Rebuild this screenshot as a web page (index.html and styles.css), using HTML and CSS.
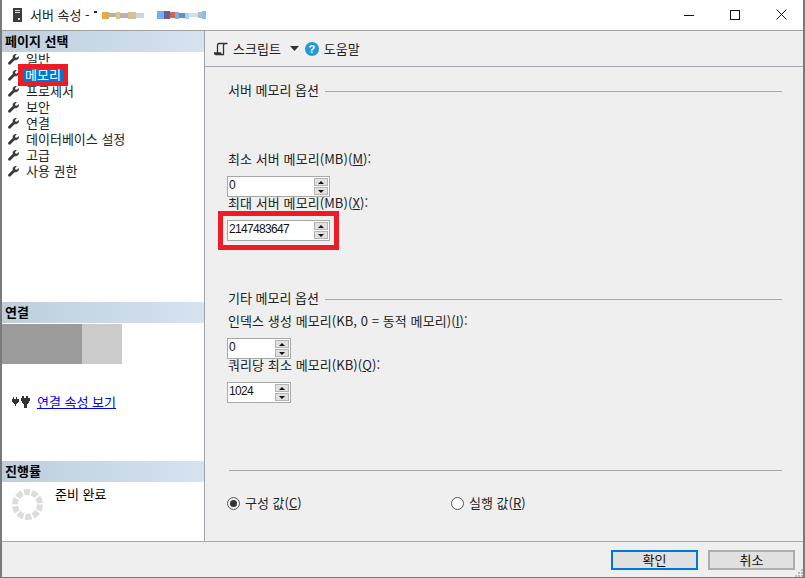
FILE: index.html
```html
<!DOCTYPE html>
<html lang="ko">
<head>
<meta charset="utf-8">
<title>서버 속성</title>
<link rel="stylesheet" href="styles.css">
</head>
<body>
<svg class="defs" width="0" height="0"><defs>
<symbol id="wrench" viewBox="0 0 12 12"><path d="M11.6 2.2 9.6 4.2 8 3.9 7.7 2.3 9.7.4C8.4-.2 6.9.1 6 1 5.100 1.900 4.900 3.200 5.300 4.300L.5 8.900C-.1 9.500-.1 10.500.5 11.100 1.100 11.800 2.100 11.800 2.700 11.200L7.500 6.500C8.700 6.900 10 6.700 10.900 5.800 11.800 4.900 12.100 3.400 11.600 2.200Z" fill="#3a3a3a"/></symbol>
</defs></svg>
<div class="window">
  <header class="titlebar">
    <svg class="server-icon" width="9" height="14" viewBox="0 0 9 14"><rect width="9" height="14" fill="#3c3c3c"/><rect x="2" y="2" width="5" height="1" fill="#ddd"/><rect x="2" y="4" width="5" height="1" fill="#ddd"/><rect x="5" y="10" width="2" height="2" fill="#ddd"/></svg>
    <span class="title-text">서버 속성 -</span>
    <svg class="redacted" width="116" height="8" viewBox="0 0 116 8" shape-rendering="crispEdges">
      <rect x="0" y="0" width="3" height="2" fill="#222"/>
      <rect x="8" y="1" width="7" height="7" fill="#e8a94c"/><rect x="15" y="2" width="7" height="4" fill="#9fb8c8"/><rect x="22" y="1" width="4" height="7" fill="#e8c27a"/><rect x="26" y="2" width="8" height="5" fill="#b7b0c0"/><rect x="34" y="1" width="8" height="7" fill="#d8c090"/><rect x="42" y="2" width="8" height="5" fill="#c9d7e2"/>
      <rect x="63" y="0" width="7" height="8" fill="#6fb0f0"/><rect x="70" y="0" width="6" height="8" fill="#6d5a98"/><rect x="76" y="1" width="5" height="6" fill="#c76a4e"/><rect x="81" y="1" width="4" height="7" fill="#8fa6d8"/><rect x="85" y="2" width="6" height="5" fill="#5d8fd8"/><rect x="91" y="2" width="4" height="6" fill="#a8d0f0"/><rect x="95" y="2" width="9" height="4" fill="#d4dde4"/><rect x="104" y="1" width="4" height="6" fill="#bbb"/><rect x="108" y="0" width="4" height="8" fill="#7fc0f8"/>
    </svg>
    <div class="win-buttons">
      <svg width="10" height="10" viewBox="0 0 10 10"><path d="M0 5.500H10" stroke="#111"/></svg>
      <svg width="10" height="10" viewBox="0 0 10 10"><rect x=".5" y=".5" width="9" height="9" fill="none" stroke="#111"/></svg>
      <svg width="11" height="11" viewBox="0 0 11 11"><path d="M.5.500 10.500 10.500M10.500.500.500 10.500" stroke="#111"/></svg>
    </div>
  </header>
  <div class="body">
    <aside class="sidebar">
      <section class="side-pages">
        <h2 class="side-head">페이지 선택</h2>
        <ul class="nav">
          <li class="nav-item"><svg class="wrench"><use href="#wrench"/></svg><span>일반</span></li>
          <li class="nav-item"><svg class="wrench"><use href="#wrench"/></svg><span class="nav-selected">메모리</span></li>
          <li class="nav-item"><svg class="wrench"><use href="#wrench"/></svg><span>프로세서</span></li>
          <li class="nav-item"><svg class="wrench"><use href="#wrench"/></svg><span>보안</span></li>
          <li class="nav-item"><svg class="wrench"><use href="#wrench"/></svg><span>연결</span></li>
          <li class="nav-item"><svg class="wrench"><use href="#wrench"/></svg><span>데이터베이스 설정</span></li>
          <li class="nav-item"><svg class="wrench"><use href="#wrench"/></svg><span>고급</span></li>
          <li class="nav-item"><svg class="wrench"><use href="#wrench"/></svg><span>사용 권한</span></li>
        </ul>
      </section>
      <section class="side-conn">
        <h2 class="side-head">연결</h2>
        <div class="conn-box"><div class="conn-dark"></div><div class="conn-light"></div></div>
        <div class="conn-link">
          <svg width="18" height="12" viewBox="0 0 18 12" shape-rendering="crispEdges"><path d="M0 3H1V1H2V3H4V1H5V3H7V6H6V7H5V8H4V10H3V8H2V7H1V6H0ZM9 2H10V0H12V2H14V0H16V2H18V5H17V7H16V8H15V12H12V8H11V7H10V5H9Z" fill="#333"/></svg>
          <a class="link" href="#">연결 속성 보기</a>
        </div>
      </section>
      <section class="side-progress">
        <h2 class="side-head">진행률</h2>
        <div class="progress-row">
          <svg class="spinner" width="31" height="31" viewBox="0 0 31 31"><circle cx="15.500" cy="15.500" r="12.500" fill="none" stroke="#dcdcdc" stroke-width="6" stroke-dasharray="6 1.850"/></svg>
          <span>준비 완료</span>
        </div>
      </section>
    </aside>
    <main class="main">
      <div class="toolbar">
        <svg class="script-icon" width="14" height="14" viewBox="0 0 14 14"><path d="M5 1.500H13.500M5 1.500C3.500 1.500 3.500 3 3.500 4V11M11 1.500C10 1.500 9.500 2.500 9.500 4V12.500H2C1 12.500 .5 11.800 .5 11H6.500C6.500 11.800 7 12.500 8 12.500" fill="none" stroke="#333" stroke-width="1.300"/></svg>
        <span class="tool-label">스크립트</span>
        <svg class="caret" width="9" height="5" viewBox="0 0 9 5"><path d="M0 0H9L4.500 5Z" fill="#333"/></svg>
        <span class="help-icon">?</span>
        <span>도움말</span>
      </div>
      <div class="content">
        <div class="group-title group-first"><span>서버 메모리 옵션</span><i class="rule"></i></div>
        <label class="field-label label-min">최소 서버 메모리(MB)(<u>M</u>):</label>
        <div class="spin spin-wide"><span class="spin-value">0</span><span class="spin-btns"><b class="up"></b><b class="down"></b></span></div>
        <label class="field-label label-max">최대 서버 메모리(MB)(<u>X</u>):</label>
        <div class="spin spin-wide spin-marked"><span class="spin-value">2147483647</span><span class="spin-btns"><b class="up"></b><b class="down"></b></span></div>
        <div class="group-title group-second"><span>기타 메모리 옵션</span><i class="rule"></i></div>
        <label class="field-label label-index">인덱스 생성 메모리(KB, 0 = 동적 메모리)(<u>I</u>):</label>
        <div class="spin spin-narrow"><span class="spin-value">0</span><span class="spin-btns"><b class="up"></b><b class="down"></b></span></div>
        <label class="field-label label-query">쿼리당 최소 메모리(KB)(<u>Q</u>):</label>
        <div class="spin spin-narrow"><span class="spin-value">1024</span><span class="spin-btns"><b class="up"></b><b class="down"></b></span></div>
        <hr class="divider">
        <div class="radios">
          <div class="radio-item radio-a"><span class="radio radio-on"></span><span>구성 값(<u>C</u>)</span></div>
          <div class="radio-item"><span class="radio"></span><span>실행 값(<u>R</u>)</span></div>
        </div>
      </div>
    </main>
  </div>
  <footer class="footer">
    <button class="btn btn-default">확인</button>
    <button class="btn">취소</button>
    <svg class="grip" width="8" height="8" viewBox="0 0 8 8" shape-rendering="crispEdges"><path d="M6 0h2v2H6zM3 3h2v2H3zM6 3h2v2H6zM0 6h2v2H0zM3 6h2v2H3zM6 6h2v2H6z" fill="#b8b8b8"/></svg>
  </footer>
</div>
</body>
</html>
```
FILE: styles.css
```css
* { box-sizing: border-box; }
html, body { margin: 0; padding: 0; }
body { width: 805px; height: 578px; overflow: hidden; font-family: "Noto Sans CJK KR", "Noto Sans", sans-serif; font-size: 13px; line-height: 16px; color: #000; background: #efefef; }
.defs { position: absolute; }
.window { width: 805px; height: 578px; display: flex; flex-direction: column; border: 2px solid #7a7a7a; border-top: 0; border-bottom-width: 1px; }
.titlebar { height: 31px; flex: none; background: #fff; display: flex; align-items: center; padding-left: 11px; border-bottom: 1px solid #a0a0a0; color: #222; }
.server-icon { margin-right: 8px; }
.title-text { margin-right: 4px; }
.win-buttons { margin-left: auto; margin-top: -1px; display: flex; align-items: center; gap: 36px; padding-right: 16px; }
.body { flex: 1; display: flex; min-height: 0; }
.sidebar { width: 203px; flex: none; background: #fff; border-right: 1px solid #a0a0a8; display: flex; flex-direction: column; }
.side-head { margin: 0; height: 21px; padding-left: 3px; font-size: 13px; font-weight: 700; line-height: 19px; background: linear-gradient(to right, #bdcedd, #d6e3f1); }
.side-pages { height: 271px; }
.nav { list-style: none; margin: -1px 0 0; padding: 0; }
.nav-item { height: 16px; display: flex; align-items: center; padding-left: 6px; color: #222; }
.wrench { width: 11px; height: 11px; margin-right: 7px; flex: none; }
.nav-selected { position: relative; z-index: 1; background: #0078d7; color: #fff; padding: 0 2px; margin-left: -3px; height: 12px; line-height: 12px; outline: 5px solid #ed1c24; }
.side-conn { height: 159px; }
.conn-box { display: flex; height: 40px; margin-top: 1px; }
.conn-dark { width: 80px; background: #9b9b9b; }
.conn-light { width: 40px; background: #cbcbcb; }
.conn-link { display: flex; align-items: center; gap: 7px; margin-top: 30px; padding-left: 10px; }
.link { color: #00f; text-decoration: underline; }
.side-progress { flex: 1; }
.progress-row { display: flex; align-items: flex-start; padding: 4px 0 0 10px; gap: 12px; }
.spinner { flex: none; margin-top: 3px; }
.main { flex: 1; display: flex; flex-direction: column; min-width: 0; background: #efefef; }
.toolbar { height: 36px; flex: none; display: flex; align-items: center; padding-left: 9px; border-bottom: 1px solid #a8a8b0; color: #222; }
.script-icon { margin-right: 5px; }
.caret { margin-left: 9px; margin-right: 6px; }
.help-icon { width: 14px; height: 14px; border-radius: 50%; background: #1e9ad6; color: #fff; font-weight: 700; font-size: 11px; line-height: 14px; text-align: center; margin-right: 5px; font-family: "Liberation Sans", sans-serif; }
.content { flex: 1; padding-left: 23px; padding-right: 21px; }
.group-title { display: flex; align-items: center; gap: 6px; height: 16px; color: #222; }
.group-first { margin-top: 15px; }
.group-second { margin-top: 49px; }
.rule { flex: 1; height: 1px; background: #a8a8a8; margin-top: 3px; }
.field-label { display: block; height: 16px; color: #222; letter-spacing: .08px; }
.label-min { margin-top: 53px; }
.label-max { margin-top: -2px; }
.label-index { margin-top: 7px; }
.label-query { margin-top: -2px; }
.spin { display: flex; align-items: center; height: 21px; border: 1px solid #a8a8a8; background: #fff; padding: 0 1px; margin: 9px 0 0 -1px; position: relative; }
.spin-wide { width: 103px; }
.spin-narrow { width: 64px; }
.spin-value { flex: 1; margin-top: -3px; font-family: "Liberation Sans", sans-serif; font-size: 12px; letter-spacing: -.67px; line-height: 16px; color: #111; }
.spin-marked { outline: 5px solid #ed1c24; outline-offset: 4px; }
.spin-btns { width: 14px; height: 17px; display: flex; flex-direction: column; gap: 1px; }
.spin-btns b { flex: 1; background: #e1e1e1; border: 1px solid #b4b4b4; display: flex; align-items: center; justify-content: center; }
.spin-btns b::before { content: ""; border-left: 3px solid transparent; border-right: 3px solid transparent; }
.spin-btns .up::before { border-bottom: 3px solid #111; }
.spin-btns .down::before { border-top: 3px solid #111; }
.divider { border: 0; height: 1px; background: #a8a8a8; margin: 67px 0 0 1px; }
.radios { display: flex; margin: 24px 0 0 -1px; align-items: center; }
.radio-item { display: flex; align-items: center; gap: 5px; color: #222; }
.radio-a { width: 224px; }
.radio { width: 13px; height: 13px; border-radius: 50%; border: 1px solid #555; background: #fff; display: flex; align-items: center; justify-content: center; }
.radio-on { background: #efefef; }
.radio-on::before { content: ""; width: 7px; height: 7px; border-radius: 50%; background: #333; }
.footer { height: 36px; flex: none; border-top: 1px solid #a8a8a8; display: flex; justify-content: flex-end; gap: 10px; padding: 8px 8px 0 0; position: relative; background: #efefef; }
.btn { width: 87px; height: 20px; border: 1px solid #adadad; border-width: 2px; background: #e1e1e1; font: inherit; line-height: 14px; padding: 0; color: #111; }
.btn-default { border-color: #0078d7; }
.grip { position: absolute; right: 0; bottom: 0; }
```
